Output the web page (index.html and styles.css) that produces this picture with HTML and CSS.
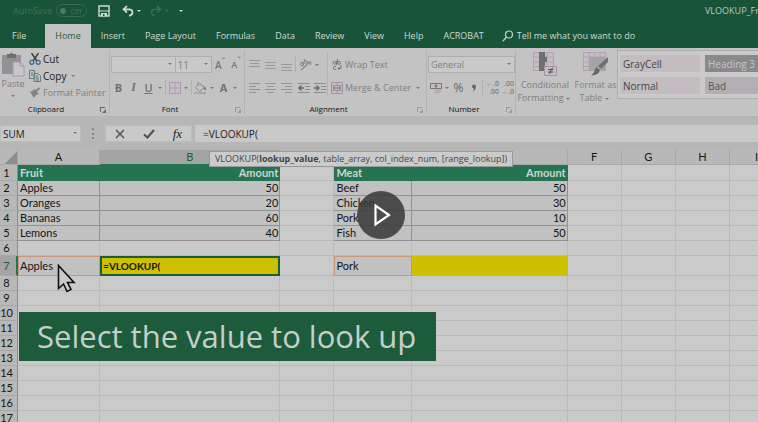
FILE: index.html
```
<!DOCTYPE html>
<html lang="en">
<head>
	<meta charset="UTF-8" />
	<meta name="viewport" content="width=device-width, initial-scale=1.0" />
	<title>VLOOKUP</title>
	<link rel="stylesheet" href="styles.css">
</head>
<body>
<div class="app">
	<header class="titlebar">
		<label class="autosave" for="autosave">AutoSave</label>
		<span class="switch"><input type="checkbox" id="autosave"><span>Off</span></span>
		<button class="qa save" aria-label="Save"><svg width="12" height="12" viewBox="0 0 12 12"><path d="M1 1h10v10H1z" fill="none" stroke="#cfdad4" stroke-width="1.4"/><path d="M1 5.500h10v1H1zM3 8h6v3H3z" fill="#cfdad4"/><path d="M5 9h1.500v2H5z" fill="#185437"/></svg></button>
		<button class="qa undo" aria-label="Undo"><svg width="12" height="12" viewBox="0 0 12 12"><path d="M5 1L1.500 4.300L5 7.500M2 4.300h5q3.500 0 3.500 3T7 10.800" fill="none" stroke="#cfdad4" stroke-width="1.700"/></svg></button>
		<i class="caret light"></i>
		<button class="qa redo" aria-label="Redo"><svg width="12" height="12" viewBox="0 0 12 12"><path d="M7 1l3.500 3.300L7 7.500M10 4.300H5q-3.500 0-3.500 3T5 10.800" fill="none" stroke="#3d7156" stroke-width="1.300"/></svg></button>
		<i class="caret dim"></i>
		<i class="caret light more"></i>
		<span class="filename">VLOOKUP_Fr</span>
	</header>

	<nav class="tabs">
		<a href="#">File</a>
		<a href="#" class="active">Home</a>
		<a href="#">Insert</a>
		<a href="#">Page Layout</a>
		<a href="#">Formulas</a>
		<a href="#">Data</a>
		<a href="#">Review</a>
		<a href="#">View</a>
		<a href="#">Help</a>
		<a href="#">ACROBAT</a>
		<a href="#" class="tell"><svg width="12" height="12" viewBox="0 0 12 12"><circle cx="7" cy="4.500" r="3.500" fill="none" stroke="#c3d0c9" stroke-width="1.200"/><path d="M4.500 7L.8 11.200" stroke="#c3d0c9" stroke-width="1.300"/></svg>Tell me what you want to do</a>
	</nav>

	<div class="ribbon">
		<section class="group clipboard">
			<div class="tools">
				<button class="paste"><svg width="24" height="25" viewBox="0 0 24 25"><path d="M1 3h19v19H1z" fill="#939196"/><path d="M6 2h3q1.500-3 3 0h3v4H6z" fill="#6e6e6e"/><path d="M12 10h7l4 4v10H12z" fill="#cbc4ca" stroke="#a29ca2"/><path d="M19 10v4h4" fill="none" stroke="#a29ca2"/></svg>Paste<i class="caret"></i></button>
				<div class="stack">
					<button class="on"><svg width="12" height="12" viewBox="0 0 12 12"><path d="M2.500 0l5.500 8M9.500 0L4 8" stroke="#404040" stroke-width="1.500"/><circle cx="2.800" cy="9.300" r="2" fill="none" stroke="#3b6591" stroke-width="1.200"/><circle cx="9.200" cy="9.300" r="2" fill="none" stroke="#3b6591" stroke-width="1.200"/></svg>Cut</button>
					<button class="on"><svg width="12" height="12" viewBox="0 0 12 12"><path d="M.5.5h5v8h-5zM5 3.500h4l2.500 2.500v5.500H5z" fill="#c6c6c6" stroke="#5f7d7d"/><path d="M2 3h2M2 5h2M6.500 6H9M6.500 8h3.500M6.500 10h3.500" stroke="#4d7979"/></svg>Copy<i class="caret"></i></button>
					<button><svg width="12" height="12" viewBox="0 0 12 12"><path d="M1 5l4-2 3 4-3 4z" fill="#858585"/><path d="M6.500 4.500L10.500 1M5 2.500l4 5" stroke="#858585" stroke-width="2"/></svg>Format Painter</button>
				</div>
			</div>
			<h2>Clipboard<i class="launch dark"></i></h2>
		</section>

		<section class="group font">
			<div class="tools rows">
				<div class="row">
					<span class="combo face"><select aria-label="Font"><option></option></select></span><span class="combo size"><select aria-label="Font size"><option>11</option></select></span>
					<button class="grow" aria-label="Increase font size">A<sup>ˆ</sup></button>
					<button class="shrink" aria-label="Decrease font size">A<sup>ˇ</sup></button>
				</div>
				<div class="row">
					<button class="tb b">B</button><button class="tb it">I</button><button class="tb u">U</button><i class="caret"></i>
					<i class="sep"></i>
					<button class="tb" aria-label="Borders"><svg width="12" height="12" viewBox="0 0 12 12"><path d="M.5.5h11v11H.5zM6 0v12M0 6h12" fill="#c8bdc7" stroke="#a99ca8"/></svg></button><i class="caret"></i>
					<i class="sep"></i>
					<button class="tb" aria-label="Fill colour"><svg width="13" height="12" viewBox="0 0 13 12"><path d="M5.500 1.500l5 4-5 4-4-4zM4 0v4" fill="none" stroke="#858585"/><path d="M10 4q3 2 2 4.500l-2-1z" fill="#858585"/><path d="M0 10h12v2H0z" fill="#a8a8a8"/></svg></button><i class="caret"></i>
					<button class="tb a">A</button><i class="caret"></i>
				</div>
			</div>
			<h2>Font<i class="launch"></i></h2>
		</section>

		<section class="group align">
			<div class="tools">
				<div class="rows">
					<div class="row">
						<button class="tb" aria-label="Top align"><svg width="11" height="12" viewBox="0 0 11 12"><path d="M0 1.500h11M1 4.500h9M0 7.500h11" stroke="#999"/></svg></button>
						<button class="tb" aria-label="Middle align"><svg width="11" height="12" viewBox="0 0 11 12"><path d="M0 3.500h11M1 6.500h9M0 9.500h11" stroke="#999"/></svg></button>
						<button class="tb" aria-label="Bottom align"><svg width="11" height="12" viewBox="0 0 11 12"><path d="M0 5.500h11M1 8.500h9M0 11.500h11" stroke="#999"/></svg></button>
						<i class="sep"></i>
						<button class="tb" aria-label="Orientation"><svg width="13" height="12" viewBox="0 0 13 12"><path d="M2 11L11 3M8 3h3.500v3" fill="none" stroke="#858585" stroke-width="1.200"/><circle cx="3" cy="5" r="1.700" fill="none" stroke="#858585"/><circle cx="6.500" cy="3" r="1.500" fill="none" stroke="#858585"/><path d="M4.500 6.500L3 2.500M5 0l1 3" stroke="#858585"/></svg></button><i class="caret"></i>
					</div>
					<div class="row">
						<button class="tb" aria-label="Align left"><svg width="11" height="12" viewBox="0 0 11 12"><path d="M0 1.500h11M0 4.500h7M0 7.500h11M0 10.500h7" stroke="#949494"/></svg></button>
						<button class="tb" aria-label="Center"><svg width="11" height="12" viewBox="0 0 11 12"><path d="M0 1.500h11M2 4.500h7M0 7.500h11M2 10.500h7" stroke="#949494"/></svg></button>
						<button class="tb" aria-label="Align right"><svg width="11" height="12" viewBox="0 0 11 12"><path d="M0 1.500h11M4 4.500h7M0 7.500h11M4 10.500h7" stroke="#949494"/></svg></button>
						<i class="sep"></i>
						<button class="tb" aria-label="Decrease indent"><svg width="12" height="12" viewBox="0 0 12 12"><path d="M0 1.500h12M7 4.500h5M7 7.500h5M0 10.500h12" stroke="#8f8f8f"/><path d="M6 6H1M3.500 3.500L1 6l2.500 2.500" fill="none" stroke="#666" stroke-width="1.400"/></svg></button>
						<button class="tb" aria-label="Increase indent"><svg width="12" height="12" viewBox="0 0 12 12"><path d="M0 1.500h12M7 4.500h5M7 7.500h5M0 10.500h12" stroke="#8f8f8f"/><path d="M0 6h5M2.500 3.500L5 6L2.500 8.500" fill="none" stroke="#666" stroke-width="1.400"/></svg></button>
					</div>
				</div>
				<div class="rows wrap">
					<div class="row">
						<button class="wide"><svg width="12" height="12" viewBox="0 0 12 12"><circle cx="3.500" cy="3.800" r="1.500" fill="none" stroke="#777"/><circle cx="8" cy="3.800" r="1.500" fill="none" stroke="#777"/><path d="M5.500 2v4M6.500 0v5M5 7.500H3q-1.500 1.500 0 3h2M7 9.500h3V6M8.500 8L7 9.500L8.500 11" fill="none" stroke="#777"/></svg>Wrap Text</button>
					</div>
					<div class="row">
						<button class="wide"><svg width="12" height="12" viewBox="0 0 12 12"><path d="M.5.5h11v11H.5zM0 3.500h12M0 8.500h12M6 0v3M6 9v3" fill="#c8bdc7" stroke="#a394a1"/><path d="M2 6h8M4 4.500L2 6l2 1.500M8 4.500L10 6L8 7.500" fill="none" stroke="#777"/></svg>Merge &amp; Center<i class="caret"></i></button>
					</div>
				</div>
			</div>
			<h2>Alignment<i class="launch"></i></h2>
		</section>

		<section class="group number">
			<div class="tools rows">
				<div class="row">
					<span class="combo format"><select aria-label="Number format"><option>General</option></select></span>
				</div>
				<div class="row">
					<button class="tb" aria-label="Accounting format"><svg width="12" height="12" viewBox="0 0 12 12"><path d="M.5 1.500h11v5H.5z" fill="#c8bdc7" stroke="#777"/><circle cx="6" cy="4" r="1.500" fill="#777"/><path d="M5 8.500h6M4 10.500h6" stroke="#b0a4b0" stroke-width="1.500"/></svg></button><i class="caret"></i>
					<button class="tb pct">%</button>
					<button class="tb" aria-label="Comma style"><svg width="6" height="8" viewBox="0 0 6 8"><path d="M1 2.500a2 2 0 1 1 4 0Q5 6 1.500 7.500Q3 6 3 4.500A2 2 0 0 1 1 2.500" fill="#666"/></svg></button>
					<i class="sep"></i>
					<button class="tb dec"><span>←.0</span><span>.00</span></button>
					<button class="tb dec"><span>.00</span><span>→.0</span></button>
				</div>
			</div>
			<h2>Number<i class="launch"></i></h2>
		</section>

		<section class="group styles">
			<button class="big cond"><svg width="24" height="24" viewBox="0 0 24 24"><path d="M.5.500h20v18H.5zM0 5h20M0 10h20M0 14.500h20M14 0v18" fill="#c8bdc7" stroke="#afa3ae"/><path d="M6 0h6v5h2v5h-2v4h1v5H6z" fill="#707070"/><path d="M11.500 14.500h12v9h-12z" fill="#c8bdc7" stroke="#a495a3"/><path d="M15 17.500h5.500M15 20h5.500M19.500 15.500l-3 6.500" stroke="#555"/></svg><span>Conditional<br>Formatting<i class="caret"></i></span></button>
			<button class="big fmt"><svg width="26" height="24" viewBox="0 0 26 24"><path d="M.5.500h22v18H.5zM0 5h22M0 10h22M0 14.500h22M6 0v18M11.500 0v18M17 0v18" fill="#c8bdc7" stroke="#afa3ae"/><path d="M6 5h17v14H6z" fill="#a6a3a8"/><path d="M25 5v5l-7 7-3-3z" fill="#707070"/><path d="M13 15l4 3q-1 5-9 5.500Q12 20 13 15" fill="#666"/></svg><span>Format as<br>Table<i class="caret"></i></span></button>
			<div class="gallery">
				<button>GrayCell</button>
				<button class="h3">Heading 3</button>
				<button>Normal</button>
				<button class="bad">Bad</button>
			</div>
		</section>
	</div>

	<div class="formulabar">
		<span class="combo namebox"><input aria-label="Name box" value="SUM"></span>
		<span class="dots"></span>
		<div class="fx">
			<button aria-label="Cancel"><svg width="10" height="10" viewBox="0 0 10 10"><path d="M1 1l8 8M9 1L1 9" stroke="#505050" stroke-width="1.500"/></svg></button>
			<button aria-label="Enter"><svg width="12" height="10" viewBox="0 0 12 10"><path d="M1 5.500l3.500 3L11 1" fill="none" stroke="#505050" stroke-width="2"/></svg></button>
			<button class="fn" aria-label="Insert function">fx</button>
		</div>
		<input class="formula" aria-label="Formula" value="=VLOOKUP(">
	</div>

	<main class="sheet">
		<table class="grid">
			<colgroup>
				<col class="cn"><col class="ca"><col class="cb"><col class="cc"><col class="cd"><col class="ce"><col class="cc"><col class="cg"><col class="cc"><col class="cg">
			</colgroup>
			<thead>
				<tr><th class="corner"></th><th>A</th><th class="sel">B</th><th></th><th></th><th></th><th>F</th><th>G</th><th>H</th><th>I</th></tr>
			</thead>
			<tbody>
				<tr class="head"><th>1</th><td class="t">Fruit</td><td class="t n">Amount</td><td></td><td class="t">Meat</td><td class="t n">Amount</td><td></td><td></td><td></td><td></td></tr>
				<tr><th>2</th><td class="d">Apples</td><td class="d n">50</td><td></td><td class="d">Beef</td><td class="d n">50</td><td></td><td></td><td></td><td></td></tr>
				<tr><th>3</th><td class="d">Oranges</td><td class="d n">20</td><td></td><td class="d">Chicken</td><td class="d n">30</td><td></td><td></td><td></td><td></td></tr>
				<tr><th>4</th><td class="d">Bananas</td><td class="d n">60</td><td></td><td class="d">Pork</td><td class="d n">10</td><td></td><td></td><td></td><td></td></tr>
				<tr><th>5</th><td class="d">Lemons</td><td class="d n">40</td><td></td><td class="d">Fish</td><td class="d n">50</td><td></td><td></td><td></td><td></td></tr>
				<tr><th>6</th><td></td><td></td><td></td><td></td><td></td><td></td><td></td><td></td><td></td></tr>
				<tr class="lookup"><th>7</th><td class="key">Apples</td><td class="edit">=VLOOKUP(</td><td></td><td class="key">Pork</td><td class="y"></td><td></td><td></td><td></td><td></td></tr>
				<tr><th>8</th><td></td><td></td><td></td><td></td><td></td><td></td><td></td><td></td><td></td></tr>
				<tr><th>9</th><td></td><td></td><td></td><td></td><td></td><td></td><td></td><td></td><td></td></tr>
				<tr><th>10</th><td></td><td></td><td></td><td></td><td></td><td></td><td></td><td></td><td></td></tr>
				<tr><th>11</th><td></td><td></td><td></td><td></td><td></td><td></td><td></td><td></td><td></td></tr>
				<tr><th>12</th><td></td><td></td><td></td><td></td><td></td><td></td><td></td><td></td><td></td></tr>
				<tr><th>13</th><td></td><td></td><td></td><td></td><td></td><td></td><td></td><td></td><td></td></tr>
				<tr><th>14</th><td></td><td></td><td></td><td></td><td></td><td></td><td></td><td></td><td></td></tr>
				<tr><th>15</th><td></td><td></td><td></td><td></td><td></td><td></td><td></td><td></td><td></td></tr>
				<tr><th>16</th><td></td><td></td><td></td><td></td><td></td><td></td><td></td><td></td><td></td></tr>
				<tr><th>17</th><td></td><td></td><td></td><td></td><td></td><td></td><td></td><td></td><td></td></tr>
			</tbody>
		</table>
		<div class="hint">VLOOKUP(<b>lookup_value</b>, table_array, col_index_num, [range_lookup])</div>
		<svg class="pointer" width="20" height="30" viewBox="0 0 20 30"><path d="M1.500 1.500v23l5-4.500 3.500 7.500 4-2-3.500-7h6.500z" fill="#cacaca" stroke="#111" stroke-width="1.600"/></svg>
		<div class="caption">Select the value to look up</div>
		<button class="play" aria-label="Play"><svg width="48" height="48" viewBox="0 0 48 48"><path d="M18.500 14.500v19L32 24z" fill="none" stroke="#fff" stroke-width="2.200"/></svg></button>
	</main>
</div>
</body>
</html>
```
FILE: styles.css
```
* {
	box-sizing: border-box;
}
body {
	margin: 0;
	background: #cacaca;
	font-family: "Open Sans", "Noto Sans", sans-serif;
	font-size: 9px;
	line-height: 14px;
	color: #222;
}
button, input, select {
	font: inherit;
	color: inherit;
	background: none;
	border: 0;
	border-radius: 0;
	margin: 0;
	padding: 0;
	appearance: none;
}
button {
	white-space: nowrap;
}
svg {
	display: block;
	flex: none;
}
.app {
	height: 100vh;
	overflow: hidden;
	display: flex;
	flex-direction: column;
}

/* title bar */
.titlebar {
	flex: none;
	height: 24px;
	padding: 0 0 3px 13px;
	display: flex;
	align-items: center;
	background: #185437;
	overflow: hidden;
}
.autosave {
	width: 43px;
	color: #467259;
}
.switch {
	width: 31px;
	height: 13px;
	padding: 0 4px 0 3px;
	border: 1px solid #3b6a50;
	border-radius: 7px;
	display: flex;
	align-items: center;
	justify-content: space-between;
	font-size: 8px;
	color: #467259;
}
.switch input {
	width: 6px;
	height: 6px;
	border-radius: 50%;
	background: #4d7a62;
}
.qa.save {
	margin-left: 11px;
}
.qa.undo {
	margin-left: 12px;
}
.qa.redo {
	margin-left: 7px;
}
.caret {
	flex: none;
	width: 9px;
	display: flex;
	justify-content: center;
}
.caret::before {
	content: "";
	border: 2px solid transparent;
	border-top-color: #777;
	border-bottom: 0;
}
.caret.light::before {
	border-top-color: #cfdad4;
}
.caret.dim::before {
	border-top-color: #3d7156;
}
.caret.more {
	margin-left: 5px;
}
.filename {
	margin-left: auto;
	width: 53px;
	color: #b9c9c0;
	white-space: nowrap;
}

/* tabs */
.tabs {
	flex: none;
	height: 24px;
	display: flex;
	background: #185437;
	overflow: hidden;
}
.tabs a {
	flex: none;
	padding: 0 10px;
	line-height: 24px;
	color: #d0dad4;
	text-decoration: none;
	white-space: nowrap;
}
.tabs a:first-child {
	padding: 0 19px 0 12px;
}
.tabs a.active {
	background: #c3c3c3;
	color: #1c5c3a;
}
.tabs a.tell {
	padding: 0 8px;
	display: flex;
	align-items: center;
	gap: 3px;
}

/* ribbon */
.ribbon {
	flex: none;
	height: 68px;
	display: flex;
	background: #c3c3c3;
	color: #7e7e7e;
	overflow: hidden;
}
.group {
	flex: none;
	display: flex;
	flex-direction: column;
	margin: 2px 0;
	border-right: 1px solid #b3b3b3;
}
.group h2 {
	position: relative;
	margin: auto 0 0;
	font-size: 8px;
	line-height: 10px;
	font-weight: 400;
	text-align: center;
	color: #111;
}
.clipboard {
	width: 110px;
}
.clipboard h2 {
	padding-right: 17px;
}
.font {
	width: 135px;
}
.font h2, .align h2, .number h2 {
	padding-right: 14px;
}
.align {
	width: 182px;
}
.number {
	width: 89px;
}
.launch {
	position: absolute;
	right: 4px;
	bottom: 2px;
	width: 5px;
	height: 5px;
	border: 1px solid #999;
	border-right: 0;
	border-bottom: 0;
}
.launch::after {
	content: "";
	position: absolute;
	left: 1px;
	top: 1px;
	border: 2px solid;
	border-color: transparent #999 #999 transparent;
}
.launch.dark {
	border-color: #666;
}
.launch.dark::after {
	border-color: transparent #666 #666 transparent;
}
.tools {
	display: flex;
}
.paste {
	width: 26px;
	padding-top: 2px;
	display: flex;
	flex-direction: column;
	align-items: center;
}
.paste .caret {
	margin-top: 4px;
}
.stack {
	padding-left: 3px;
}
.stack button {
	height: 17px;
	display: flex;
	align-items: center;
	gap: 2px;
}
.stack .on {
	font-size: 10px;
	color: #222;
}
.rows {
	display: flex;
	flex-direction: column;
	gap: 6px;
	padding: 6px 0 0 1px;
}
.row {
	display: flex;
	align-items: center;
	height: 17px;
}
.combo {
	position: relative;
	display: flex;
	height: 17px;
	background: #c9c9c9;
	border: 1px solid #afafaf;
}
.combo::after {
	content: "";
	position: absolute;
	right: 3px;
	top: 6px;
	border: 2px solid transparent;
	border-top-color: #777;
	border-bottom: 0;
}
.combo select, .combo input {
	width: 100%;
	padding: 0 2px;
}
.face {
	width: 65px;
}
.size {
	width: 37px;
	border-left: 0;
	font-size: 10px;
}
.format {
	width: 87px;
}
.grow, .shrink {
	width: 16px;
	font-size: 10px;
	font-weight: 600;
	color: #777;
}
.shrink {
	font-size: 9px;
}
.grow sup, .shrink sup {
	font-size: 8px;
	line-height: 0;
}
.tb {
	flex: none;
	width: 15px;
	height: 17px;
	display: flex;
	align-items: center;
	justify-content: center;
}
.b, .u, .a {
	font-weight: 700;
	font-size: 11px;
	color: #707070;
}
.it {
	font: italic 700 12px "Liberation Serif", serif;
	color: #707070;
}
.u {
	font-weight: 600;
	text-decoration: underline;
}
.row > .caret {
	width: 8px;
}
.sep {
	width: 1px;
	height: 15px;
	margin: 0 1px;
	background: #b0b0b0;
}
.align .tb {
	width: 16px;
}
.wrap {
	margin: 2px 0 0 2px;
	padding: 4px 0 0 3px;
	border-left: 1px solid #b3b3b3;
}
.align .tools > .rows:first-child {
	width: 80px;
}
.wide {
	display: flex;
	align-items: center;
	gap: 2px;
}
.pct {
	font-size: 12px;
	color: #666;
}
.dec {
	flex-direction: column;
	align-items: flex-end;
	font-size: 7px;
	line-height: 8px;
	font-weight: 600;
}
.styles {
	flex: 1;
	flex-direction: row;
	align-items: flex-start;
	margin-bottom: 0;
	border: 0;
}
.big {
	flex: none;
	padding-top: 2px;
	display: flex;
	flex-direction: column;
	align-items: center;
	gap: 2px;
	line-height: 13px;
}
.big .caret {
	display: inline-flex;
	vertical-align: middle;
}
.cond {
	width: 58px;
}
.fmt {
	width: 43px;
}
.gallery {
	flex: 1;
	height: 49px;
	padding: 4px 2px;
	display: grid;
	grid-template-columns: 80px minmax(80px, 1fr);
	grid-auto-rows: 17px;
	gap: 5px;
	background: #cacaca;
	border: 1px solid #adadad;
	font-size: 10px;
}
.gallery button {
	padding-left: 3px;
	text-align: left;
	background: #c3bcc1;
	color: #444;
}
.gallery .h3 {
	background: #8a888c;
	color: #c6c6c6;
}
.gallery .bad {
	background: #b1afb4;
	color: #555;
}

/* formula bar */
.formulabar {
	flex: none;
	height: 34px;
	padding: 9px 0 8px;
	display: flex;
	background: #b6b6b6;
	color: #222;
	font-size: 10px;
}
.namebox {
	width: 81px;
	border-color: #bdbdbd;
}
.dots {
	width: 2px;
	margin: 3px 11px 3px 11px;
	border-left: 2px dotted #888;
}
.fx {
	width: 87px;
	display: flex;
	justify-content: space-around;
	align-items: center;
	background: #c9c9c9;
	border: 1px solid #bdbdbd;
}
.fx .fn {
	font: italic 13px "Liberation Serif", serif;
}
.formula {
	flex: 1;
	margin-left: 3px;
	padding-left: 8px;
	background: #c9c9c9;
}

/* sheet */
.sheet {
	position: relative;
	flex: 1;
	overflow: hidden;
}
.grid {
	table-layout: fixed;
	width: 784px;
	border-collapse: separate;
	border-spacing: 0;
	font-family: Lato, "Open Sans", sans-serif;
	font-size: 11px;
	line-height: 14px;
	color: #151515;
}
.cn { width: 18px; }
.ca { width: 82px; }
.cb { width: 180px; }
.cc { width: 54px; }
.cd { width: 78px; }
.ce { width: 155px; }
.cg { width: 54px; }
.grid th, .grid td {
	height: 15px;
	padding: 0 2px;
	border-right: 1px solid #bababa;
	border-bottom: 1px solid #bababa;
	text-align: left;
	white-space: nowrap;
}
.grid th {
	padding: 0;
	background: #b8b8b8;
	border-color: #a8a8a8;
	font-weight: 400;
	text-align: center;
}
.grid tbody th {
	padding-right: 4px;
	border-right-color: #8c8c8c;
}
.grid thead th.sel {
	background: #a4a4a4;
	color: #1c5c3a;
	border-bottom-color: #247452;
}
.grid .corner {
	background: linear-gradient(135deg, #b8b8b8 60%, #8d8d8d 60%);
}
.grid .head th, .grid .head td {
	height: 16px;
}
.grid .t {
	background: #247452;
	border-color: #247452;
	color: #ccd6d1;
	font-weight: 700;
}
.grid .d {
	background: #c1c1c1;
	border-color: #929292;
}
.grid .n {
	text-align: right;
	padding-right: 1px;
}
.grid .lookup th, .grid .lookup td {
	height: 20px;
}
.grid .lookup th {
	background: #a4a4a4;
	color: #1c5c3a;
	border-right: 2px solid #247452;
	padding-right: 3px;
}
.grid .key {
	background: #c1c1c1;
	border: 1px solid #c9987a;
	padding-left: 1px;
}
.grid .edit {
	background: #cdc000;
	border: 2px solid #1c5c3a;
	font-size: 10px;
	font-weight: 700;
	padding: 0 1px;
}
.grid .y {
	background: #cdc000;
	border-color: #cdc000;
}
.hint {
	position: absolute;
	left: 209px;
	top: 1px;
	height: 16px;
	padding: 0 5px;
	border: 1px solid #999;
	background: #cbcbcb;
	color: #444;
	white-space: nowrap;
}
.pointer {
	position: absolute;
	left: 57px;
	top: 114px;
}
.caption {
	position: absolute;
	left: 19px;
	top: 162px;
	padding: 0 20px 0 18px;
	background: #1c5c3a;
	color: #c6ceca;
	font-size: 31px;
	line-height: 49px;
	font-weight: 400;
	white-space: nowrap;
}
.play {
	position: absolute;
	left: 357px;
	top: 41px;
	width: 48px;
	height: 48px;
	border-radius: 50%;
	background: rgba(55, 55, 55, 0.85);
}
```
